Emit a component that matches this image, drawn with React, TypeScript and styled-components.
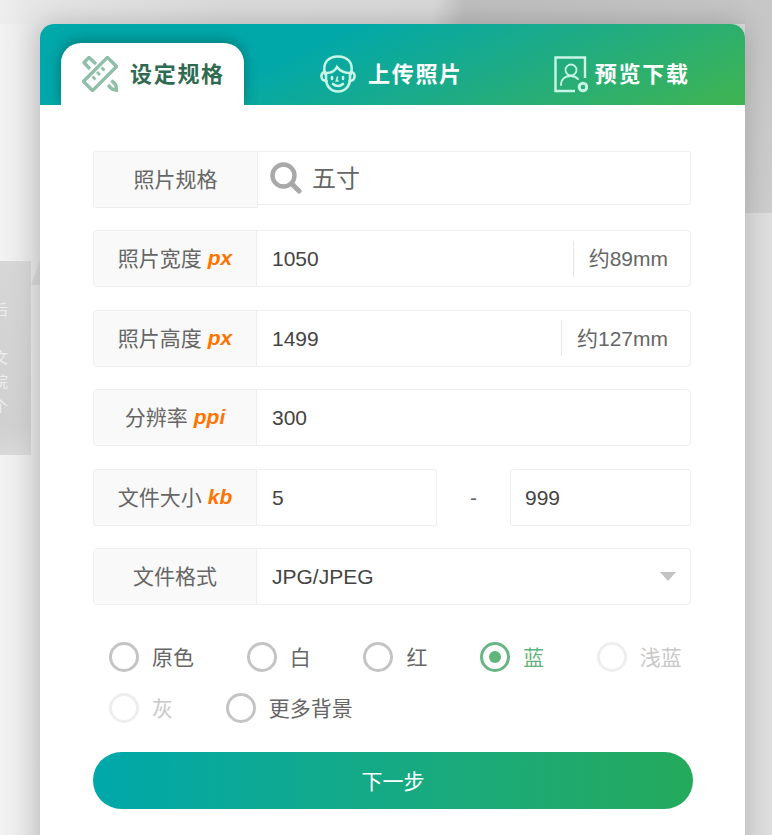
import React from "react";
import styled, { createGlobalStyle } from "styled-components";

const Global = createGlobalStyle`
  html, body { margin: 0; padding: 0; height: 100%; overflow: hidden; }
  body { font-family: "Liberation Sans", "Noto Sans CJK SC", sans-serif; }
  #root { height: 100%; }
`;

const Page = styled.div`
  position: relative;
  height: 835px;
  overflow: hidden;
  padding: 24px 27px 0 40px;
  box-sizing: border-box;
  background:
    linear-gradient(#c6c6c6, #cdcdcd) right top / 27px 213px no-repeat,
    linear-gradient(100deg, #efefef 0%, #e6e6e6 4%, #dadada 30%, #d8d8d8 56%, #bebebe 60%, #c6c6c6 100%) top / 100% 24px no-repeat,
    linear-gradient(90deg, #f3f3f3 0%, #e4e4e4 5%, #e0e0e0 50%, #dedede 100%);
`;

const BackPanel = styled.div`
  position: absolute;
  left: 0;
  top: 261px;
  width: 31px;
  height: 194px;
  background: linear-gradient(#d6d6d6, #d0d0d0 85%, #d8d8d8);
  color: #eee;
  font-family: "Noto Sans CJK SC", sans-serif;
  font-size: 15px;
  line-height: 24px;
  &::after {
    content: "";
    position: absolute;
    left: 31px;
    top: 0;
    border-style: solid;
    border-width: 0 0 24px 9px;
    border-color: transparent transparent #d8d8d8 transparent;
  }
`;

const BackLine = styled.div<{ $top: number }>`
  position: absolute;
  left: -7px;
  top: ${(p) => p.$top}px;
`;

const Card = styled.div`
  position: relative;
  width: 705px;
  min-height: 900px;
  border-radius: 14px 14px 0 0;
  background: #fff;
  box-shadow: 0 0 28px rgba(0, 0, 0, 0.2);
`;

const Header = styled.div`
  display: flex;
  align-items: flex-end;
  height: 81px;
  padding-left: 21px;
  border-radius: 14px 14px 0 0;
  background: linear-gradient(155deg, #00a8aa 0%, #00a8aa 35%, #1cab88 62%, #40b450 100%);
`;

const Tab = styled.div<{ $active?: boolean; $offset: number; $gap: number }>`
  display: flex;
  align-items: center;
  box-sizing: border-box;
  height: 62px;
  margin-left: ${(p) => p.$offset}px;
  gap: ${(p) => p.$gap}px;
  color: ${(p) => (p.$active ? "#2f6b52" : "#fff")};
  font: 700 22px/1 "Noto Sans CJK SC", sans-serif;
  letter-spacing: 1.7px;
  ${(p) =>
    p.$active
      ? `
    width: 183px;
    padding: 0 0 0 21px;
    border-radius: 20px 20px 0 0;
    background: #fff;
    box-shadow: 0 -2px 14px rgba(0, 60, 60, 0.45);
    clip-path: inset(-20px -20px 0 -20px);
  `
      : ""}
`;

const TabText = styled.span`
  margin-top: -4px;
`;

const Form = styled.div`
  display: flex;
  flex-direction: column;
  gap: 22.5px;
  padding: 45.9px 54px 0 53px;
`;

const Row = styled.div<{ $bare?: boolean }>`
  display: flex;
  box-sizing: border-box;
  height: 57px;
  border-radius: 4px;
  ${(p) => (p.$bare ? "" : "border: 1px solid #eee;")}
`;

const Label = styled.div<{ $bordered?: boolean; $width?: number }>`
  display: flex;
  flex: none;
  align-items: center;
  justify-content: center;
  box-sizing: border-box;
  width: ${(p) => p.$width ?? 163}px;
  gap: 6px;
  padding-bottom: 2px;
  background: #f9f9f9;
  color: #666;
  font: 400 21px/1 "Noto Sans CJK SC", sans-serif;
  border-radius: 3px 0 0 3px;
  ${(p) => (p.$bordered ? "border: 1px solid #eee;" : "border-right: 1px solid #eee;")}
`;

const Unit = styled.span`
  color: #ff7300;
  font: italic 700 21px/1 "Liberation Sans", sans-serif;
`;

const Value = styled.div`
  flex: 1;
  display: flex;
  align-items: center;
  padding-left: 15px;
  color: #444;
  font: 400 21px/1 "Liberation Sans", sans-serif;
`;

const SearchBox = styled.div`
  flex: 1;
  display: flex;
  align-items: center;
  box-sizing: border-box;
  height: 54px;
  gap: 10px;
  padding-left: 12px;
  border: 1px solid #eee;
  border-left: none;
  border-radius: 0 3px 3px 0;
  color: #666;
  font: 400 24px/1 "Noto Sans CJK SC", sans-serif;
`;

const SearchText = styled.span`
  margin-top: -2px;
`;

const Measure = styled.div`
  display: flex;
  align-items: center;
  height: 36px;
  align-self: center;
  padding: 0 22px 0 15px;
  border-left: 1px solid #e6e6e6;
  color: #666;
  font: 400 21px/1 "Liberation Sans", "Noto Sans CJK SC", sans-serif;
`;

const SizeBox = styled.div<{ $width: number; $bordered?: boolean }>`
  display: flex;
  align-items: center;
  box-sizing: border-box;
  width: ${(p) => p.$width}px;
  padding-left: ${(p) => (p.$bordered ? 14 : 15)}px;
  border: 1px solid #eee;
  ${(p) => (p.$bordered ? "" : "border-left: none;")}
  border-radius: 3px;
  color: #444;
  font: 400 21px/1 "Liberation Sans", sans-serif;
`;

const Dash = styled.div`
  flex: 1;
  display: flex;
  align-items: center;
  justify-content: center;
  color: #666;
  font: 400 21px/1 "Liberation Sans", sans-serif;
`;

const Caret = styled.div`
  width: 0;
  height: 0;
  margin-right: 14px;
  align-self: center;
  border-style: solid;
  border-width: 9px 8.5px 0 8.5px;
  border-color: #c4c4c4 transparent transparent transparent;
`;

const Radios = styled.div`
  display: flex;
  flex-wrap: wrap;
  gap: 21px 52.7px;
  margin-top: 14px;
  padding-left: 16px;
`;

const Radio = styled.div<{ $state: "off" | "on" | "disabled" }>`
  display: flex;
  align-items: center;
  gap: 13px;
  height: 30px;
  color: ${(p) =>
    p.$state === "on" ? "#5fb57c" : p.$state === "disabled" ? "#c8c8c8" : "#666"};
  font: 400 21px/1 "Noto Sans CJK SC", sans-serif;
`;

const Circle = styled.span<{ $state: "off" | "on" | "disabled" }>`
  display: flex;
  align-items: center;
  justify-content: center;
  box-sizing: border-box;
  width: 30px;
  height: 30px;
  border-radius: 50%;
  border: 3px solid
    ${(p) =>
      p.$state === "on" ? "#6ab585" : p.$state === "disabled" ? "#eeeeee" : "#c4c4c4"};
`;

const Dot = styled.span`
  width: 12px;
  height: 12px;
  border-radius: 50%;
  background: #5fb57c;
`;

const NextButton = styled.button`
  display: block;
  width: 600px;
  height: 57px;
  margin: 7px 0 0;
  padding: 0;
  border: none;
  border-radius: 29px;
  background: linear-gradient(90deg, #00a8aa 0%, #1aaa7c 60%, #25aa5c 100%);
  color: #fff;
  font: 400 21px/1 "Noto Sans CJK SC", sans-serif;
`;

const RulerIcon = () => (
  <svg width="36" height="36" viewBox="0 0 36 36" fill="none" stroke="#8fbfa8" strokeWidth="3.4" strokeLinejoin="round">
    <rect x="1" y="11.500" width="34" height="13" transform="rotate(-45 18 18)" />
    <path d="M10.500 20.500l3 3M15 16l3 3M19.500 11.500l3 3" strokeWidth="2.800" />
    <path d="M8 13L2 6.500 7 1.500 14 8" />
    <path d="M26 29l4 4 5 1.500-1.500-6-4-4" />
  </svg>
);

const FaceIcon = () => (
  <svg width="36" height="38" viewBox="0 0 36 38" fill="none" stroke="#c8f5e6" strokeWidth="2.600" strokeLinecap="round">
    <path d="M5 19C2 7 9 1.500 18 1.500S34 7 31 19" />
    <path d="M5 17c-5 0-5 9 1.500 9M31 17c5 0 5 9-1.500 9" />
    <path d="M6 18c5 0 9-2 11-6 3 4 8 6 13 6v6c0 7-5 12.500-12 12.500S6 31 6 24z" />
    <path d="M12 22v2M23 22v2" />
    <path d="M17.500 22l-1.200 4h1.800" strokeWidth="1.600" />
    <path d="M13 29c3 2.500 7 2.500 10 0" />
  </svg>
);

const PortraitIcon = () => (
  <svg width="34" height="37" viewBox="0 0 34 37" fill="none" stroke="#c8f5e6" strokeWidth="2.400">
    <path d="M31 22V1.500H1.500V35H21" />
    <circle cx="17" cy="14" r="5.500" strokeWidth="1.800" />
    <path d="M7 29c0-6 4-9 10-9 3 0 5 1 7 3" strokeWidth="1.800" strokeLinecap="round" />
    <circle cx="29" cy="31" r="3.800" strokeWidth="3" />
  </svg>
);

const SearchIcon = () => (
  <svg width="32" height="32" viewBox="0 0 32 32" fill="none" stroke="#a8a8a8" strokeWidth="4.400">
    <circle cx="13.500" cy="13.500" r="11" />
    <path d="M22 22l7 7" strokeLinecap="round" strokeWidth="5" />
  </svg>
);

type RadioItem = { label: string; state: "off" | "on" | "disabled" };

const radios: RadioItem[] = [
  { label: "原色", state: "off" },
  { label: "白", state: "off" },
  { label: "红", state: "off" },
  { label: "蓝", state: "on" },
  { label: "浅蓝", state: "disabled" },
  { label: "灰", state: "disabled" },
  { label: "更多背景", state: "off" },
];

export default function App() {
  return (
    <Page>
      <Global />
      <BackPanel>
        <BackLine $top={36}>后</BackLine>
        <BackLine $top={84}>文</BackLine>
        <BackLine $top={108}>院</BackLine>
        <BackLine $top={133}>个</BackLine>
      </BackPanel>
      <Card>
        <Header>
          <Tab $active $offset={0} $gap={12}>
            <RulerIcon />
            <TabText>设定规格</TabText>
          </Tab>
          <Tab $offset={76} $gap={12}>
            <FaceIcon />
            <TabText>上传照片</TabText>
          </Tab>
          <Tab $offset={91} $gap={7}>
            <PortraitIcon />
            <TabText>预览下载</TabText>
          </Tab>
        </Header>
        <Form>
          <Row $bare>
            <Label $bordered $width={165}>
              照片规格
            </Label>
            <SearchBox>
              <SearchIcon />
              <SearchText>五寸</SearchText>
            </SearchBox>
          </Row>
          <Row>
            <Label>
              照片宽度 <Unit>px</Unit>
            </Label>
            <Value>1050</Value>
            <Measure>约89mm</Measure>
          </Row>
          <Row>
            <Label>
              照片高度 <Unit>px</Unit>
            </Label>
            <Value>1499</Value>
            <Measure>约127mm</Measure>
          </Row>
          <Row>
            <Label>
              分辨率 <Unit>ppi</Unit>
            </Label>
            <Value>300</Value>
          </Row>
          <Row $bare>
            <Label $bordered $width={164}>
              文件大小 <Unit>kb</Unit>
            </Label>
            <SizeBox $width={180}>5</SizeBox>
            <Dash>-</Dash>
            <SizeBox $width={181} $bordered>
              999
            </SizeBox>
          </Row>
          <Row>
            <Label>文件格式</Label>
            <Value>JPG/JPEG</Value>
            <Caret />
          </Row>
          <Radios>
            {radios.map((r) => (
              <Radio key={r.label} $state={r.state}>
                <Circle $state={r.state}>{r.state === "on" && <Dot />}</Circle>
                {r.label}
              </Radio>
            ))}
          </Radios>
          <NextButton>下一步</NextButton>
        </Form>
      </Card>
    </Page>
  );
}
